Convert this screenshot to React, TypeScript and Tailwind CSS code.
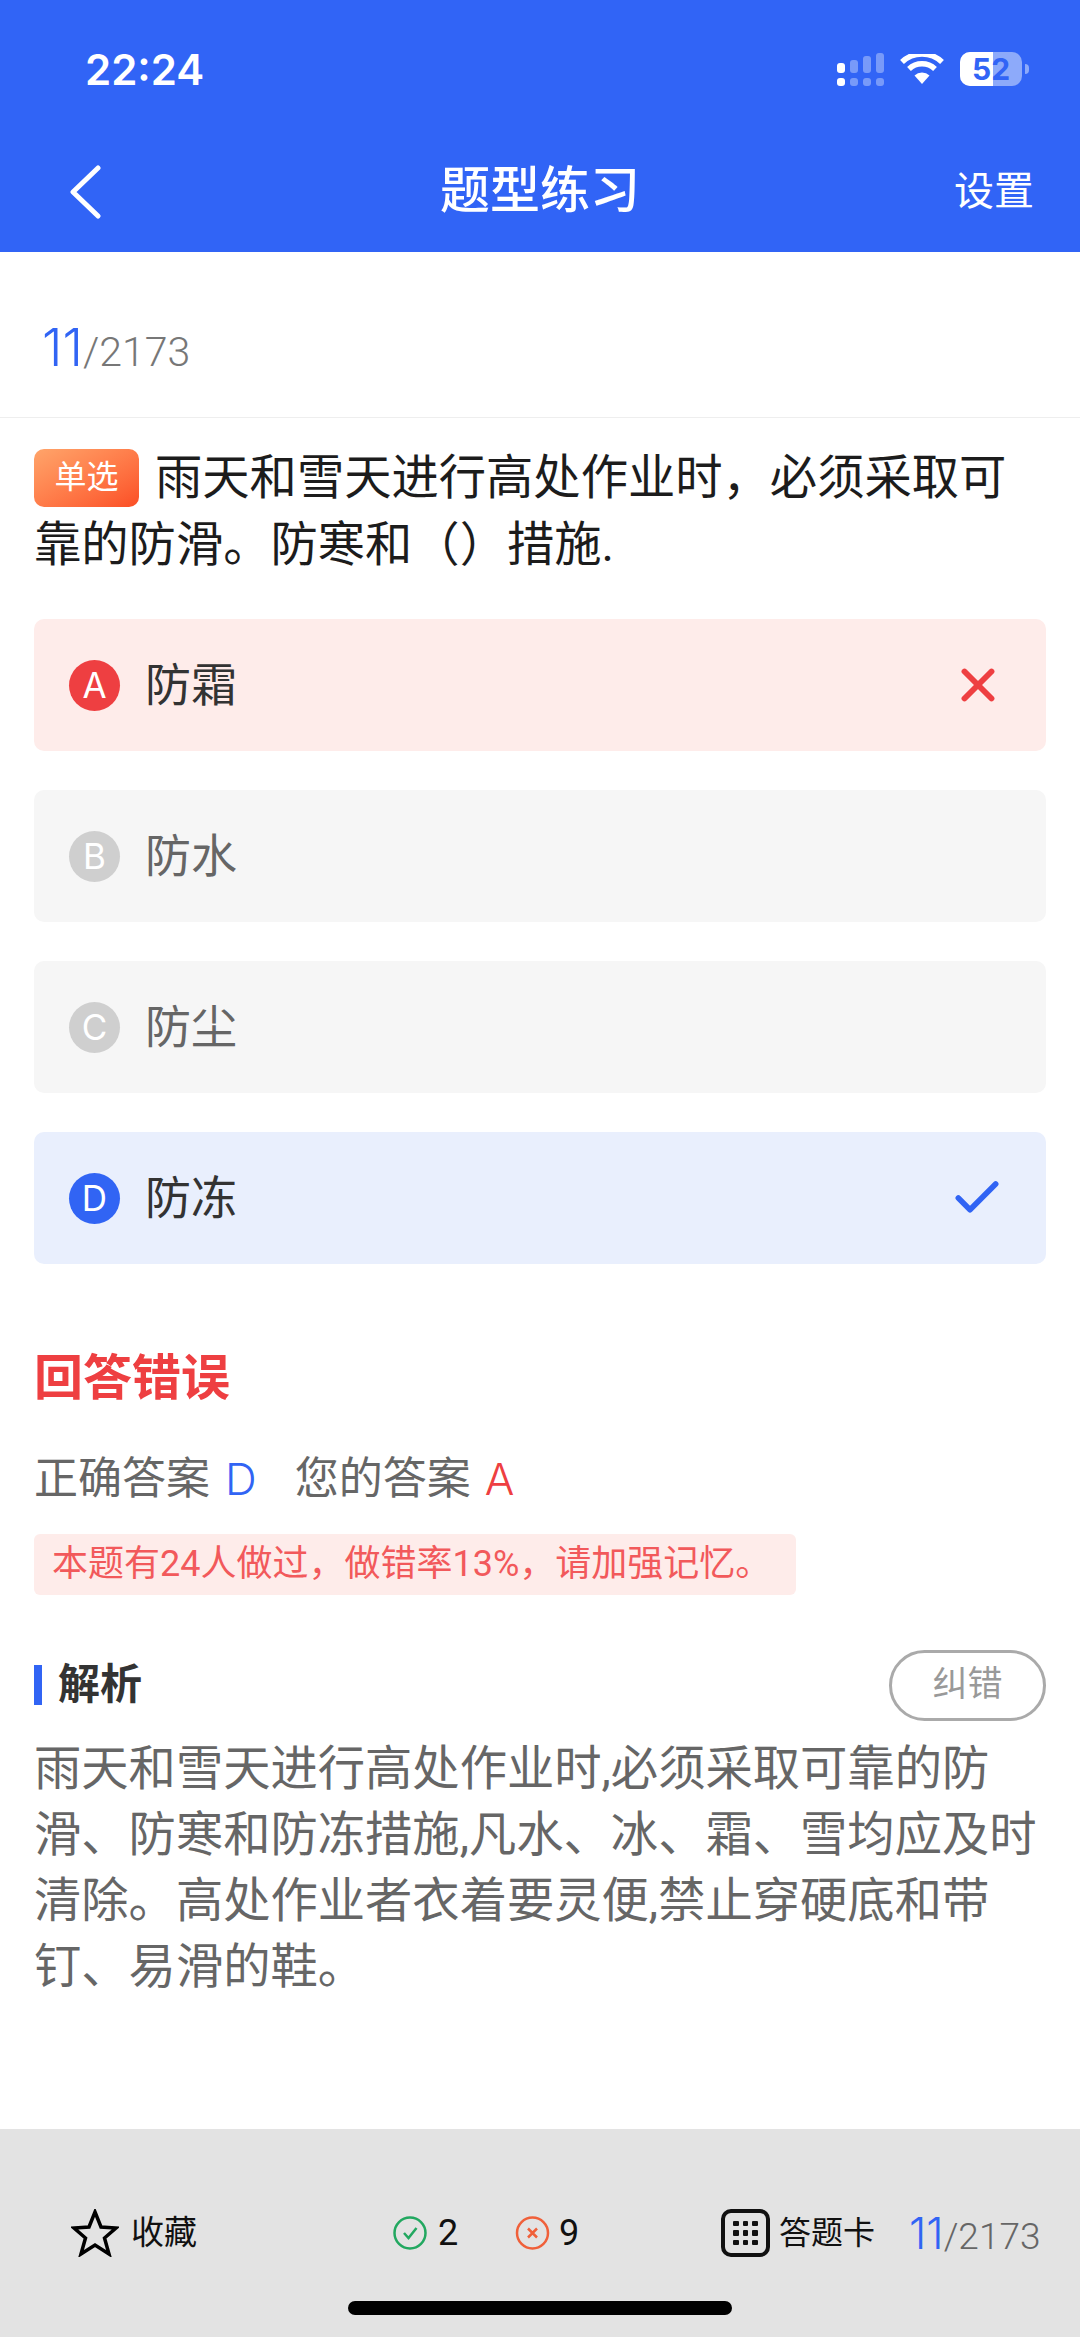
import { Check, X } from "lucide-react";

const font = { fontFamily: 'Roboto, "Noto Sans CJK SC", sans-serif' };
const inter = { fontFamily: "Inter, sans-serif" };

function Option({ letter, text, tone }: { letter: string; text: string; tone: "wrong" | "none" | "right" }) {
  const box = tone === "wrong" ? "bg-[#feecea]" : tone === "right" ? "bg-[#e9effd]" : "bg-[#f6f6f6]";
  const dot = tone === "wrong" ? "bg-[#ee3f41]" : tone === "right" ? "bg-[#3164f4]" : "bg-[#cfcfcf]";
  const label = tone === "none" ? "text-[#666]" : "text-[#333]";
  return (
    <div className={`${box} h-[132px] rounded-[10px] flex items-center pl-[35px] pr-[41px]`}>
      <div
        className={`${dot} w-[51px] h-[51px] rounded-full text-white text-[35px] flex items-center justify-center`}
        style={inter}
      >
        {letter}
      </div>
      <span className={`${label} text-[46px] ml-[25px] flex-1`}>{text}</span>
      {tone === "wrong" && <X className="w-[54px] h-[54px] text-[#ee3f41]" strokeWidth={2.6} />}
      {tone === "right" && <Check className="w-[56px] h-[56px] text-[#3164f4]" strokeWidth={2.4} />}
    </div>
  );
}

export default function App() {
  return (
    <div className="w-[1080px] h-[2337px] bg-white flex flex-col overflow-hidden" style={font}>
      {/* Status bar + nav */}
      <div className="bg-[#3164f6] h-[252px] text-white shrink-0 flex flex-col">
        <div className="h-[138px] flex items-center justify-between pl-[85px] pr-[51px]">
          <span className="text-[42px] font-semibold" style={inter}>22:24</span>
          <div className="flex items-center">
            <svg width="47" height="33" viewBox="0 0 47 33" fill="#fff">
              <rect x="0" y="10" width="8" height="10" rx="3" />
              <rect x="13" y="7" width="8" height="13" rx="3" opacity="0.35" />
              <rect x="26" y="3" width="8" height="17" rx="3" opacity="0.35" />
              <rect x="39" y="0" width="8" height="20" rx="3" opacity="0.35" />
              <rect x="0" y="25" width="8" height="8" rx="3" />
              <rect x="13" y="25" width="8" height="8" rx="3" opacity="0.35" />
              <rect x="26" y="25" width="8" height="8" rx="3" opacity="0.35" />
              <rect x="39" y="25" width="8" height="8" rx="3" opacity="0.35" />
            </svg>
            <svg className="ml-[16px]" width="44" height="30" viewBox="0 0 44 30" fill="none" stroke="#fff" strokeWidth="5.5">
              <path d="M22 30 L14.5 21.5 A11 11 0 0 1 29.5 21.5 Z" fill="#fff" stroke="none" />
              <path d="M9 15 A19 19 0 0 1 35 15" />
              <path d="M2 8 A29 29 0 0 1 42 8" />
            </svg>
            <div className="ml-[16px] w-[62px] h-[34px] rounded-[10px] bg-white/45 relative overflow-hidden flex items-center justify-center">
              <div className="absolute left-0 top-0 bottom-0 w-[33px] bg-white" />
              <span className="relative text-[#3164f6] text-[30px] font-bold" style={inter}>52</span>
            </div>
            <div className="ml-[3px] w-[4px] h-[10px] rounded-r-full bg-white/45" />
          </div>
        </div>
        <div className="flex-1 flex items-center justify-between pl-[69px] pr-[46px] pb-[7px] relative">
          <svg width="32" height="54" viewBox="0 0 32 54" fill="none" stroke="#fff" strokeWidth="5" strokeLinecap="round" strokeLinejoin="round">
            <path d="M29 3 L4 27 L29 51" />
          </svg>
          <span className="absolute left-0 right-0 text-center text-[50px] font-medium">题型练习</span>
          <span className="text-[40px]">设置</span>
        </div>
      </div>

      {/* Counter */}
      <div className="h-[166px] border-b border-[#eee] flex items-baseline pt-[57px] pl-[42px] shrink-0">
        <span className="text-[#3164f4] text-[52px] font-light" style={inter}>11</span>
        <span className="text-[#777] text-[41px] font-light">/2173</span>
      </div>

      <div className="px-[34px] pt-[27px]">
        <p className="text-[47.3px] leading-[67px] text-[#1c1c1c]">
          <span className="inline-flex items-center justify-center align-[6px] w-[105px] h-[58px] -my-[12px] rounded-[10px] bg-gradient-to-br from-[#ffa46a] to-[#fb4d24] text-white text-[32px] mr-[16px]">单选</span>
          雨天和雪天进行高处作业时，必须采取可靠的防滑。防寒和（）措施.
        </p>

        <div className="flex flex-col gap-[39px] mt-[40px]">
          <Option letter="A" text="防霜" tone="wrong" />
          <Option letter="B" text="防水" tone="none" />
          <Option letter="C" text="防尘" tone="none" />
          <Option letter="D" text="防冻" tone="right" />
        </div>

        <div className="text-[#ee3f41] text-[49px] font-bold mt-[78px]">回答错误</div>
        <div className="text-[#666] text-[44px] mt-[30px] flex">
          <span>正确答案</span>
          <span className="text-[#3164f4] font-light ml-[15px]" style={inter}>D</span>
          <span className="ml-[38px]">您的答案</span>
          <span className="text-[#ee3f41] font-light ml-[14px]" style={inter}>A</span>
        </div>
        <div className="bg-[#feecea] text-[#f2595b] text-[36px] w-[762px] h-[61px] mt-[22px] pl-[18px] rounded-[6px] flex items-center">
          本题有24人做过，做错率13%，请加强记忆。
        </div>

        <div className="flex items-center justify-between mt-[55px]">
          <div className="border-l-[8px] border-[#3164f4] pl-[16px] text-[42px] leading-[40px] font-bold text-[#333]">解析</div>
          <div className="w-[157px] h-[71px] rounded-full border-[3px] border-[#aaa] text-[#999] text-[35px] flex items-center justify-center">纠错</div>
        </div>
        <p className="text-[#666] text-[47.3px] leading-[66px] mt-[15px]">
          雨天和雪天进行高处作业时,必须采取可靠的防滑、防寒和防冻措施,凡水、冰、霜、雪均应及时清除。高处作业者衣着要灵便,禁止穿硬底和带钉、易滑的鞋。
        </p>
      </div>

      {/* Bottom bar */}
      <div className="mt-auto h-[208px] bg-[#e3e3e3] relative shrink-0 text-[#111]">
        <div className="flex items-center h-[48px] mt-[80px] pl-[71px]">
          <svg width="48" height="48" viewBox="0 0 48 48" fill="none" stroke="#000" strokeWidth="3.5">
            <polygon points="24,3 30,18 45,19 33.5,29 38,45 24,36 10,45 14.5,29 3,19 18,18" />
          </svg>
          <span className="text-[33px] ml-[12px]">收藏</span>

          <svg className="ml-[196px]" width="34" height="34" viewBox="0 0 34 34" fill="none" stroke="#22a860" strokeWidth="2.5">
            <circle cx="17" cy="17" r="15.5" />
            <path d="M11 17 L15.5 22 L23.5 12" />
          </svg>
          <span className="text-[36px] ml-[11px] w-[20px]">2</span>
          <svg className="ml-[57px]" width="35" height="34" viewBox="0 0 34 34" fill="none" stroke="#f0603a" strokeWidth="2.5">
            <circle cx="17" cy="17" r="15.5" />
            <path d="M12.5 12.5 L21.5 21.5 M21.5 12.5 L12.5 21.5" />
          </svg>
          <span className="text-[36px] ml-[9px] w-[20px]">9</span>

          <div className="ml-[142px] w-[49px] h-[48px] border-[4px] border-[#111] rounded-[10px] grid grid-cols-3 gap-[4px] p-[8px]">
            {[0, 1, 2, 3, 4, 5, 6, 7, 8].map((i) => (
              <div key={i} className="bg-[#111] rounded-[1px]" />
            ))}
          </div>
          <span className="text-[32px] ml-[9px]">答题卡</span>
          <div className="flex items-baseline ml-[34px]">
            <span className="text-[#3164f4] text-[44px] font-light" style={inter}>11</span>
            <span className="text-[#666] text-[37px] font-light">/2173</span>
          </div>
        </div>
        <div className="absolute left-[348px] bottom-[22px] w-[384px] h-[14px] rounded-full bg-black" />
      </div>
    </div>
  );
}
